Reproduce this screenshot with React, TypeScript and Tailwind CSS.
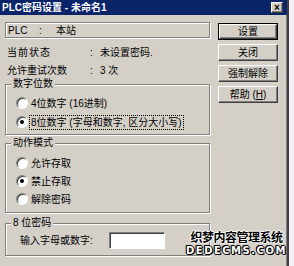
import React from "react";

const raised =
  "border border-t-white border-l-white border-r-[#404040] border-b-[#404040] shadow-[inset_-1px_-1px_0_#808080]";

function Radio({ label, checked, focus }: { label: string; checked?: boolean; focus?: boolean }) {
  return (
    <div className="flex h-[16px] items-center whitespace-nowrap">
      <span className="relative flex h-[12px] w-[12px] items-center justify-center rounded-full border border-t-[#808080] border-l-[#808080] border-r-white border-b-white bg-white shadow-[inset_1px_1px_0_#404040]">
        {checked && <span className="h-[4px] w-[4px] rounded-full bg-black" />}
      </span>
      <span
        className={
          "ml-[1px] px-[1px] leading-[13px] " +
          (focus ? "border border-dotted border-black" : "border border-transparent")
        }
      >
        {label}
      </span>
    </div>
  );
}

function Group({ title, className, children }: { title: string; className: string; children: React.ReactNode }) {
  return (
    <div
      className={
        "relative border border-[#808080] shadow-[inset_1px_1px_0_#fff,1px_1px_0_#fff] " + className
      }
    >
      <span className="absolute left-[5px] top-[-8px] bg-[#d4d0c8] px-[2px] leading-[14px]">{title}</span>
      {children}
    </div>
  );
}

export default function App() {
  const buttons = ["设置", "关闭", "强制解除"];
  return (
    <div className="h-[266px] w-[294px] overflow-hidden bg-[#f6eff6] font-['Liberation_Sans','Noto_Sans_CJK_SC',sans-serif] text-[10px] text-black">
      <div className="relative flex h-[266px] w-[289px] flex-col border-r-2 border-r-[#404040] bg-[#d4d0c8] shadow-[inset_-1px_0_0_#808080]">
        {/* Title bar */}
        <div className="flex h-[15px] items-center justify-between bg-[#0a246a] pl-[2px] pr-[4px]">
          <span className="font-bold leading-[15px] text-white">PLC密码设置 - 未命名1</span>
          <span
            className={
              "flex h-[11px] w-[12px] items-center justify-center bg-[#d4d0c8] text-[10px] font-bold leading-none " +
              raised
            }
          >
            ×
          </span>
        </div>

        <div className="flex">
          {/* Left column */}
          <div className="ml-[5px] w-[205px]">
            <div className="mt-[7px] flex h-[16px] items-center border border-[#808080] shadow-[inset_1px_1px_0_#fff,1px_1px_0_#fff]">
              <span className="ml-[2px] w-[31px]">PLC</span>
              <span className="w-[17px]">:</span>
              <span>本站</span>
            </div>

            <div className="mt-[5px] flex h-[18px] items-center pl-[2px]">
              <span className="w-[83px] tracking-[1px]">当前状态</span>
              <span className="w-[10px]">:</span>
              <span>未设置密码.</span>
            </div>
            <div className="flex h-[18px] items-center pl-[2px]">
              <span className="w-[83px]">允许重试次数</span>
              <span className="w-[10px]">:</span>
              <span>3 次</span>
            </div>

            <Group title="数字位数" className="mt-[5px] flex flex-col gap-[3px] pb-[4px] pl-[10px] pt-[10px]">
              <Radio label="4位数字 (16进制)" />
              <Radio label="8位数字 (字母和数字, 区分大小写)" checked focus />
            </Group>

            <Group title="动作模式" className="mt-[8px] flex flex-col gap-[2px] pb-[5px] pl-[10px] pt-[11px]">
              <Radio label="允许存取" />
              <Radio label="禁止存取" checked />
              <Radio label="解除密码" />
            </Group>

            <Group title="8 位密码" className="mt-[10px] flex items-center pb-[6px] pl-[14px] pt-[8px]">
              <span className="w-[89px]">输入字母或数字:</span>
              <span className="h-[17px] w-[56px] border border-t-[#808080] border-l-[#808080] border-r-white border-b-white bg-white shadow-[inset_1px_1px_0_#404040]" />
            </Group>
          </div>

          {/* Right buttons */}
          <div className="ml-[8px] mt-[8px] flex w-[60px] flex-col gap-[4px]">
            {buttons.map((b, i) => (
              <div
                key={b}
                className={
                  i === 0
                    ? "flex h-[17px] items-center justify-center border border-black bg-[#d4d0c8] leading-none"
                    : "flex h-[17px] items-center justify-center bg-[#d4d0c8] leading-none " + raised
                }
              >
                {i === 0 ? (
                  <span className={"flex h-full w-full items-center justify-center " + raised}>{b}</span>
                ) : (
                  b
                )}
              </div>
            ))}
            <div className={"flex h-[17px] items-center justify-center bg-[#d4d0c8] leading-none " + raised}>
              帮助 (<u>H</u>)
            </div>
          </div>
        </div>

        {/* Watermark */}
        <div className="absolute left-[186px] top-[232px] flex flex-col items-center leading-none">
          <span className="text-[12px] font-bold tracking-[-0.5px] text-black [text-shadow:1px_0_0_#fff,-1px_0_0_#fff,0_1px_0_#fff,0_-1px_0_#fff]">
            织梦内容管理系统
          </span>
          <span className="mt-[2px] font-['DejaVu_Sans',sans-serif] text-[10px] font-bold tracking-[1.5px] text-white [text-shadow:1px_0_0_#000,-1px_0_0_#000,0_1px_0_#000,0_-1px_0_#000,1px_1px_0_#000,-1px_-1px_0_#000]">
            DEDECMS.COM
          </span>
        </div>
      </div>
    </div>
  );
}
